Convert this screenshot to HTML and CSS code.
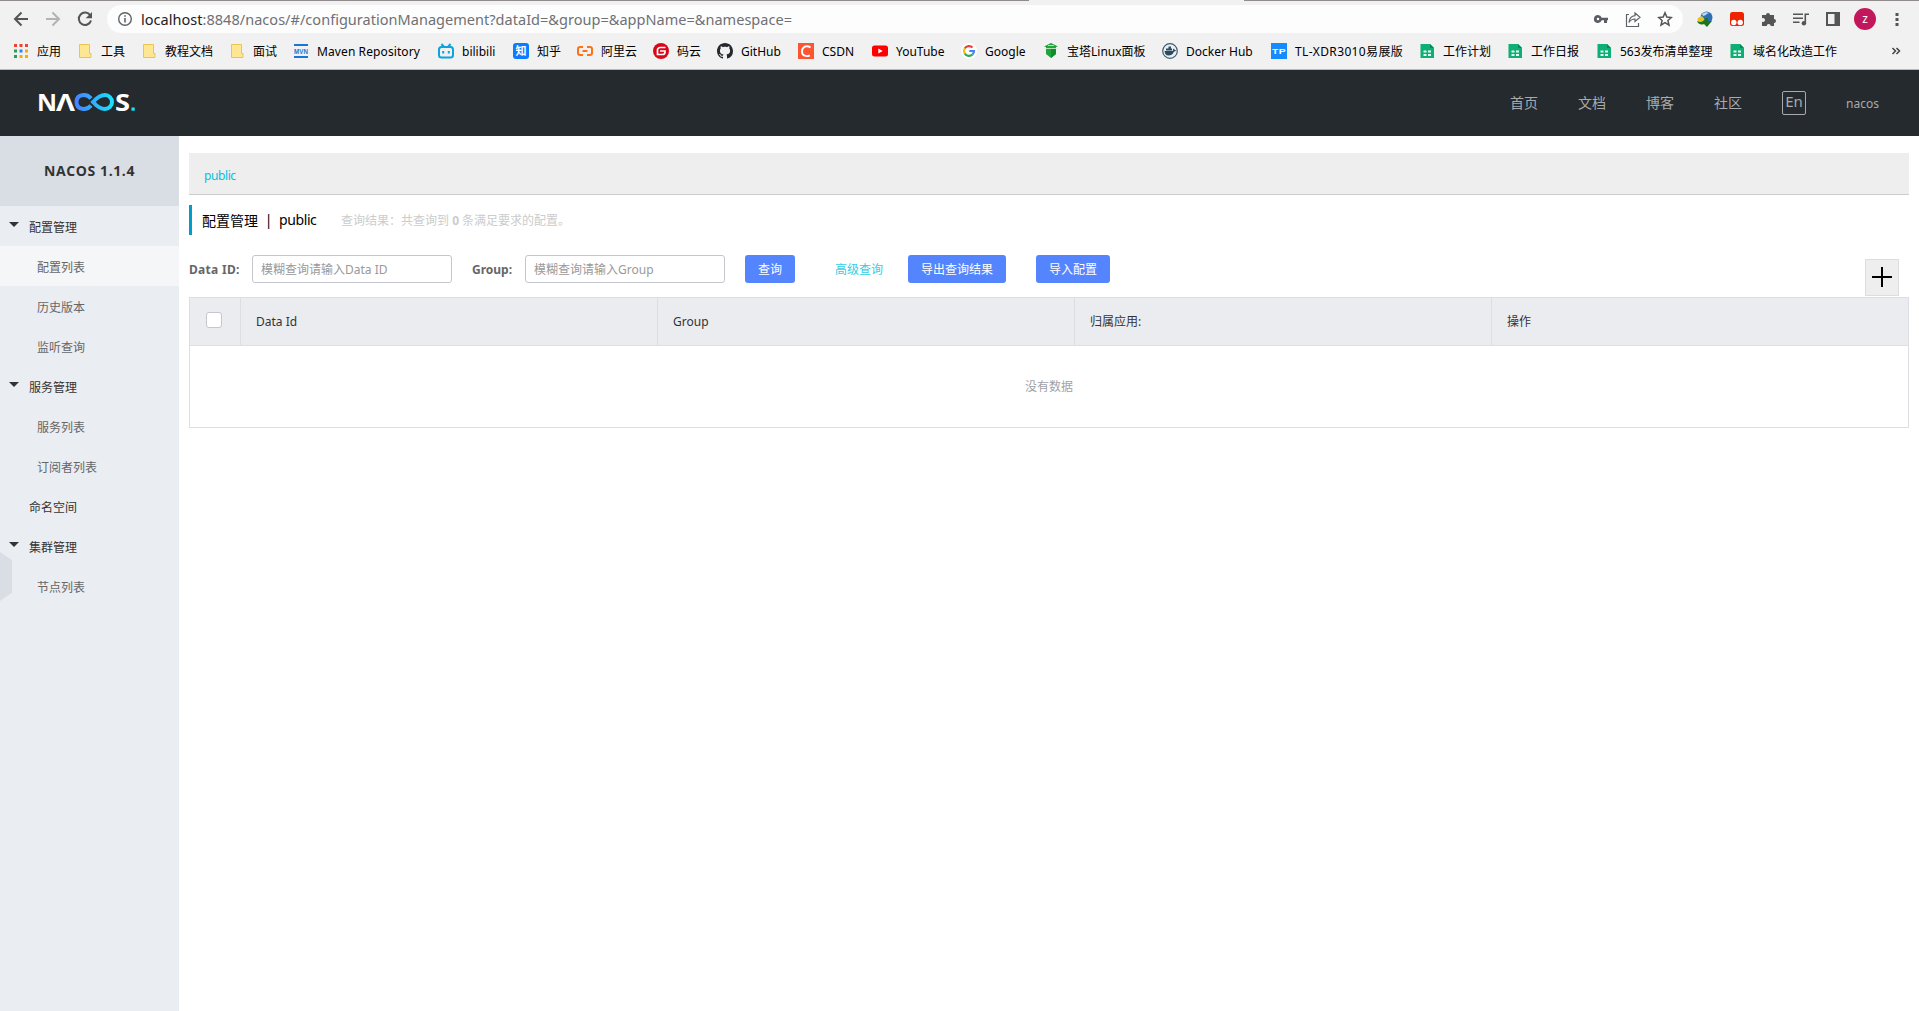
FILE: index.html
```html
<!DOCTYPE html>
<html lang="zh-CN">
<head>
  <meta charset="UTF-8">
  <title>Nacos</title>
  <link rel="stylesheet" href="styles.css">
</head>
<body>
  <div class="browser">
    <div class="tab-edge"><span></span><span></span></div>
    <div class="toolbar">
      <div class="nav-buttons">
        <svg class="icon" viewBox="0 0 16 16"><path d="M15 8H2.500M8.500 1.500 2 8l6.500 6.500" fill="none" stroke="#555" stroke-width="2"/></svg>
        <svg class="icon" viewBox="0 0 16 16"><path d="M1 8h12.500M7.500 1.500 14 8l-6.500 6.500" fill="none" stroke="#b3b3b3" stroke-width="2"/></svg>
        <svg class="icon" viewBox="0 0 16 16"><path d="M13.300 4.500A6.200 6.200 0 1 0 14 9.500" fill="none" stroke="#555" stroke-width="2"/><path d="M15 1v6.300H8.700z" fill="#555"/></svg>
      </div>
      <div class="omnibox">
        <svg class="icon" viewBox="0 0 16 16"><circle cx="8" cy="8" r="6.300" fill="none" stroke="#5f6368" stroke-width="1.400"/><path d="M7.200 7h1.600v4.500H7.200zM7.200 4.200h1.600v1.600H7.200z" fill="#5f6368"/></svg>
        <span class="url"><span class="host">localhost</span>:8848/nacos/#/configurationManagement?dataId=&amp;group=&amp;appName=&amp;namespace=</span>
        <svg class="icon" viewBox="0 0 16 16"><path d="M5 4a4 4 0 1 0 3.700 5.300H11V12h3V9.300h1V6.700H8.700A4 4 0 0 0 5 4zm0 2.700a1.300 1.300 0 1 1 0 2.600 1.300 1.300 0 0 1 0-2.600z" fill="#5a5d61"/></svg>
        <svg class="icon" viewBox="0 0 16 16"><path d="M4 3.500H1.500v12h12V12" fill="none" stroke="#5f6368" stroke-width="1.200"/><path d="M10 2l5 4.300-5 4.200V8C7 8 5.500 9 4 11.500 4.300 7.500 6.500 5 10 4.600z" fill="none" stroke="#5f6368" stroke-width="1.200"/></svg>
        <svg class="icon" viewBox="0 0 16 16"><path d="M8 1.800l1.800 4.300 4.600.4-3.500 3 1.100 4.600L8 11.600l-4 2.500 1.100-4.600-3.500-3 4.600-.4z" fill="none" stroke="#555" stroke-width="1.500"/></svg>
      </div>
      <div class="extensions">
        <svg class="icon" viewBox="0 0 16 16"><circle cx="9.500" cy="6.500" r="6" fill="#2d6fb5"/><path d="M5 3c2-2 5-2.500 7-1-2 0-3 3-6 3z" fill="#b9d8ee"/><path d="M1 7l4-2 4 5-5 3c-3 0-4-3-3-6z" fill="#e2c328"/><path d="M0 10c3 2 7 1 8-3h3v3h4l-5 6-3-3c-3 1.500-6 0-7-3z" fill="#20731f"/></svg>
        <svg class="icon" viewBox="0 0 16 16"><rect x="1" y="1" width="14" height="14" rx="2.500" fill="#ee2400"/><circle cx="4.800" cy="11.500" r="2.700" fill="#fff"/><circle cx="11.200" cy="11.500" r="2.700" fill="#fff"/></svg>
        <svg class="icon" viewBox="0 0 16 16"><path d="M1 4h4a2 2 0 1 1 4 0h4v4a2 2 0 1 1 0 4v3H9.700a2 2 0 1 0-4 0H1v-4.300a2 2 0 1 0 0-3.400z" fill="#555"/></svg>
        <svg class="icon" viewBox="0 0 16 16"><path d="M0 3.200h10M0 7.200h10M0 11.200h6.500" stroke="#555" stroke-width="1.600"/><path d="M12.300 12V3.200H16" fill="none" stroke="#555" stroke-width="1.600"/><circle cx="10.900" cy="12.300" r="2.200" fill="#555"/></svg>
        <svg class="icon" viewBox="0 0 16 16"><path d="M1 1h14v14H1zM3 3v10h6.500V3z" fill="#555" fill-rule="evenodd"/></svg>
        <span class="avatar">z</span>
        <svg class="icon" viewBox="0 0 16 16"><path d="M6.500 2h3v3h-3zM6.500 7h3v3h-3zM6.500 12h3v3h-3z" fill="#555"/></svg>
      </div>
    </div>
    <div class="bookmarks">
      <a class="bookmark"><svg class="icon" viewBox="0 0 16 16"><path d="M1 1h3v3H1zM6.500 1h3v3h-3zM12 1h3v3h-3z" fill="#ea4335"/><path d="M1 6.500h3v3H1zM1 12h3v3H1z" fill="#2e9e57"/><path d="M6.500 6.500h3v3h-3z" fill="#2684fc"/><path d="M12 6.500h3v3h-3zM6.500 12h3v3h-3zM12 12h3v3h-3z" fill="#f9ab00"/></svg>应用</a>
      <a class="bookmark"><svg class="icon" viewBox="0 0 16 16"><path d="M2.500 1.500h10v9h1.500v4H2.500z" fill="#ffe693" stroke="#ecc550"/></svg>工具</a>
      <a class="bookmark"><svg class="icon" viewBox="0 0 16 16"><path d="M2.500 1.500h10v9h1.500v4H2.500z" fill="#ffe693" stroke="#ecc550"/></svg>教程文档</a>
      <a class="bookmark"><svg class="icon" viewBox="0 0 16 16"><path d="M2.500 1.500h10v9h1.500v4H2.500z" fill="#ffe693" stroke="#ecc550"/></svg>面试</a>
      <a class="bookmark maven"><svg class="icon" viewBox="0 0 16 16"><path d="M1 1h14v2H1zM1 13h14v2H1z" fill="#1976d2"/><text x="1" y="10.800" textLength="14" lengthAdjust="spacingAndGlyphs" class="icon-text" fill="#1976d2">MVN</text></svg>Maven Repository</a>
      <a class="bookmark"><svg class="icon" viewBox="0 0 16 16"><rect x="1" y="4" width="14" height="10.500" rx="2.500" fill="none" stroke="#0da3e0" stroke-width="2"/><path d="M3.500 1l2.500 3M12.500 1 10 4M5.200 8v2.500M10.800 8v2.500" stroke="#0da3e0" stroke-width="2"/></svg>bilibili</a>
      <a class="bookmark"><svg class="icon" viewBox="0 0 16 16"><rect width="16" height="16" rx="3" fill="#0b7bff"/><text x="2.500" y="12" class="icon-zhi" fill="#fff">知</text></svg>知乎</a>
      <a class="bookmark"><svg class="icon" viewBox="0 0 16 16"><path d="M6 4H3a2 2 0 0 0-2 2v4a2 2 0 0 0 2 2h3M10 4h3a2 2 0 0 1 2 2v4a2 2 0 0 1-2 2h-3M5.500 8h5" fill="none" stroke="#ff7214" stroke-width="2"/></svg>阿里云</a>
      <a class="bookmark"><svg class="icon" viewBox="0 0 16 16"><circle cx="8" cy="8" r="8" fill="#d80718"/><path d="M12.500 4.500H7A2.500 2.500 0 0 0 4.500 7v4.500H9.500A2.500 2.500 0 0 0 12 9V8H7" fill="none" stroke="#fff" stroke-width="1.700"/></svg>码云</a>
      <a class="bookmark"><svg class="icon" viewBox="0 0 16 16"><path fill="#24292e" d="M8 0C3.580 0 0 3.580 0 8c0 3.540 2.290 6.530 5.470 7.590.4.070.55-.17.55-.38 0-.19-.01-.82-.01-1.490-2.010.37-2.530-.49-2.690-.94-.09-.23-.48-.94-.82-1.130-.28-.15-.68-.52-.01-.53.63-.01 1.080.58 1.230.82.72 1.210 1.870.87 2.330.66.070-.52.28-.87.51-1.070-1.780-.2-3.640-.89-3.640-3.950 0-.87.31-1.590.82-2.150-.08-.2-.36-1.020.08-2.120 0 0 .67-.21 2.200.82.64-.18 1.320-.27 2-.27s1.360.09 2 .27c1.530-1.040 2.200-.82 2.200-.82.44 1.100.16 1.920.08 2.120.51.56.82 1.270.82 2.150 0 3.070-1.870 3.750-3.650 3.950.29.25.54.73.54 1.480 0 1.070-.01 1.930-.01 2.200 0 .21.15.46.55.38A8.010 8.010 0 0 0 16 8c0-4.420-3.580-8-8-8z"/></svg>GitHub</a>
      <a class="bookmark"><svg class="icon" viewBox="0 0 16 16"><path d="M0 0h16v16H0z" fill="#fc5531"/><path d="M12.500 4.500C9 2 4 3.500 4 8.500c0 4.500 4.500 5.500 7.800 3.800" fill="none" stroke="#fff" stroke-width="1.900"/></svg>CSDN</a>
      <a class="bookmark"><svg class="icon" viewBox="0 0 16 16"><rect y="2.500" width="16" height="11" rx="2.500" fill="#f00"/><path d="M6.300 5.500v5l4.400-2.500z" fill="#fff"/></svg>YouTube</a>
      <a class="bookmark"><svg class="icon" viewBox="0 0 16 16"><circle cx="8" cy="8" r="8" fill="#fff"/><g fill="none" stroke-width="2.200"><path d="M3.700 5.500A5 5 0 0 1 11.500 4.500" stroke="#ea4335"/><path d="M3.700 5.500a5 5 0 0 0 0 5" stroke="#fbbc05"/><path d="M3.700 10.500a5 5 0 0 0 7.800 1" stroke="#34a853"/><path d="M11.500 11.500A5 5 0 0 0 13 8H8.300" stroke="#4285f4"/></g></svg>Google</a>
      <a class="bookmark"><svg class="icon" viewBox="0 0 16 16"><path d="M1 3.500 6 1l2-1 2 1 5 2.500-2 .5v7l-5 4-5-4V4z" fill="#20a53a"/><path d="M1.500 5.500h13M5 2.500h6" stroke="#d5eeda" stroke-width=".8"/><path d="M8 6v9l5-4V6z" fill="#148a2d"/></svg>宝塔Linux面板</a>
      <a class="bookmark"><svg class="icon" viewBox="0 0 16 16"><circle cx="8" cy="8" r="7.300" fill="#e9f0f4" stroke="#3f5b6e" stroke-width="1.200"/><path d="M2.500 8h8.300c0-1.200.3-2 1-2.500.7.500.8 1 .8 1.500l1.400.3c-.4 1-1 1.300-2 1.300-1 3-3.300 4-5.500 4S3 11.500 2.500 8zM4 5.500h6v2H4zM6.500 3.500h2.500v2H6.500z" fill="#2c4b60"/></svg>Docker Hub</a>
      <a class="bookmark tp-link"><svg class="icon" viewBox="0 0 16 16"><path d="M0 0h16v16H0z" fill="#148cff"/><text x="1" y="11" textLength="14" lengthAdjust="spacingAndGlyphs" class="icon-text" fill="#fff">TP</text></svg>TL-XDR3010易展版</a>
      <a class="bookmark"><svg class="icon" viewBox="0 0 16 16"><path d="M1.500 1h9.500l4 4v10h-13.500z" fill="#0eaf74"/><path d="M11 1l4 4h-4z" fill="#078a5a"/><path d="M4.500 7.500h3v2h-3zM9 7.500h3v2H9zM4.500 11h3v2h-3zM9 11h3v2H9z" fill="#e4fff3"/></svg>工作计划</a>
      <a class="bookmark"><svg class="icon" viewBox="0 0 16 16"><path d="M1.500 1h9.500l4 4v10h-13.500z" fill="#0eaf74"/><path d="M11 1l4 4h-4z" fill="#078a5a"/><path d="M4.500 7.500h3v2h-3zM9 7.500h3v2H9zM4.500 11h3v2h-3zM9 11h3v2H9z" fill="#e4fff3"/></svg>工作日报</a>
      <a class="bookmark"><svg class="icon" viewBox="0 0 16 16"><path d="M1.500 1h9.500l4 4v10h-13.500z" fill="#0eaf74"/><path d="M11 1l4 4h-4z" fill="#078a5a"/><path d="M4.500 7.500h3v2h-3zM9 7.500h3v2H9zM4.500 11h3v2h-3zM9 11h3v2H9z" fill="#e4fff3"/></svg>563发布清单整理</a>
      <a class="bookmark"><svg class="icon" viewBox="0 0 16 16"><path d="M1.500 1h9.500l4 4v10h-13.500z" fill="#0eaf74"/><path d="M11 1l4 4h-4z" fill="#078a5a"/><path d="M4.500 7.500h3v2h-3zM9 7.500h3v2H9zM4.500 11h3v2h-3zM9 11h3v2H9z" fill="#e4fff3"/></svg>域名化改造工作</a>
      <svg class="icon more" viewBox="0 0 16 16"><path d="M4.500 5l3 3-3 3M8.500 5l3 3-3 3" fill="none" stroke="#444" stroke-width="1.500"/></svg>
    </div>
  </div>

  <header class="header">
    <svg class="logo" viewBox="0 0 98 20" width="98" height="20">
      <defs>
        <linearGradient id="wave" gradientUnits="userSpaceOnUse" x1="36" y1="0" x2="77" y2="0">
          <stop offset="0" stop-color="#4a7dff"/>
          <stop offset="1" stop-color="#14e8fa"/>
        </linearGradient>
      </defs>
      <text x="-1" y="18.500" textLength="20" lengthAdjust="spacingAndGlyphs" class="logo-text">N</text>
      <text x="18" y="18.500" textLength="19" lengthAdjust="spacingAndGlyphs" class="logo-text">Λ</text>
      <path d="M53 13.500C48.500 19 38.500 18 38.500 10S48.500 1 53 6.500M55 10C59 5.500 62 3 67 3a7 7 0 0 1 0 14C62 17 59 14.500 55 10z" fill="none" stroke="url(#wave)" stroke-width="4"/>
      <text x="77" y="18.500" textLength="15" lengthAdjust="spacingAndGlyphs" class="logo-text">S</text>
      <path d="M93.500 15.500h3.200v3.200h-3.200z" fill="#14e8fa"/>
    </svg>
    <nav class="nav">
      <a>首页</a>
      <a>文档</a>
      <a>博客</a>
      <a>社区</a>
      <a class="lang">En</a>
      <a class="user">nacos</a>
    </nav>
  </header>

  <div class="layout">
    <aside class="sidebar">
      <h1 class="version">NACOS 1.1.4</h1>
      <ul class="menu">
        <li class="group open">配置管理</li>
        <li class="item active">配置列表</li>
        <li class="item">历史版本</li>
        <li class="item">监听查询</li>
        <li class="group open">服务管理</li>
        <li class="item">服务列表</li>
        <li class="item">订阅者列表</li>
        <li class="group">命名空间</li>
        <li class="group open">集群管理</li>
        <li class="item">节点列表</li>
      </ul>
      <div class="collapse"></div>
    </aside>

    <main class="main">
      <div class="namespace-bar">public</div>
      <div class="page-title">
        <span>配置管理</span><span class="divider">|</span><span class="ns">public</span>
        <span class="hint">查询结果：共查询到 <strong>0</strong> 条满足要求的配置。</span>
      </div>
      <form class="search">
        <label class="label-id">Data ID:</label>
        <input type="text" placeholder="模糊查询请输入Data ID">
        <label class="label-group">Group:</label>
        <input type="text" placeholder="模糊查询请输入Group">
        <button type="button" class="btn query">查询</button>
        <a class="advanced">高级查询</a>
        <button type="button" class="btn export">导出查询结果</button>
        <button type="button" class="btn import">导入配置</button>
        <div class="add"><svg viewBox="0 0 20 20" width="20" height="20"><path d="M10 0v20M0 10h20" stroke="#000" stroke-width="2"/></svg></div>
      </form>
      <div class="table">
        <div class="table-head">
          <div class="check"><input type="checkbox" class="checkbox"></div>
          <div>Data Id</div>
          <div>Group</div>
          <div>归属应用:</div>
          <div>操作</div>
        </div>
        <div class="empty">没有数据</div>
      </div>
    </main>
  </div>
</body>
</html>
```
FILE: styles.css
```css
* {
  box-sizing: border-box;
}
body {
  margin: 0;
  height: 1011px;
  overflow: hidden;
  display: flex;
  flex-direction: column;
  background: #fff;
  font-family: "Noto Sans", "Noto Sans CJK SC", sans-serif;
  font-size: 12px;
  color: #333;
}
.icon {
  width: 16px;
  height: 16px;
  flex: none;
}
.icon-text {
  font: bold 8px "Liberation Sans", sans-serif;
}
.icon-zhi {
  font: bold 11px "Noto Sans CJK SC", sans-serif;
}

/* browser bars */
.browser {
  height: 70px;
  flex: none;
  background: #f1f1f1;
  border-bottom: 1px solid #b9babb;
}
.tab-edge {
  display: flex;
  justify-content: space-between;
  height: 1px;
}
.tab-edge span {
  width: 1029px;
  background: #908c8e;
}
.tab-edge span + span {
  width: 675px;
}
.toolbar {
  display: flex;
  align-items: center;
  height: 36px;
  padding: 0 14px 0 13px;
}
.nav-buttons, .extensions {
  display: flex;
  align-items: center;
  gap: 16px;
}
.omnibox {
  display: flex;
  align-items: center;
  gap: 16px;
  width: 1576px;
  height: 28px;
  margin: 0 14px 0 14px;
  padding: 0 10px;
  border-radius: 14px;
  background: #fdfdfd;
}
.url {
  flex: 1;
  margin-left: -8px;
  padding-bottom: 1px;
  font-size: 14.500px;
  letter-spacing: .03px;
  color: #6e7175;
  white-space: nowrap;
}
.host {
  color: #202124;
}
.avatar {
  width: 22px;
  height: 22px;
  margin: 0 -3px;
  border-radius: 50%;
  background: #c2185b;
  color: #fff;
  line-height: 21px;
  text-align: center;
}
.bookmarks {
  display: grid;
  grid-template-columns: 64px 64px 88px 64px 145px 75px 64px 76px 64px 81px 74px 89px 82px 119px 109px 148px 88px 89px 133px 124px 1fr;
  align-items: center;
  height: 32px;
  padding: 0 15px 4px 13px;
}
.bookmark {
  display: flex;
  align-items: center;
  gap: 8px;
  color: #000;
  white-space: nowrap;
}
.maven {
  letter-spacing: .1px;
}
.tp-link {
  letter-spacing: .35px;
}
.more {
  justify-self: end;
}

/* header */
.header {
  display: flex;
  align-items: center;
  justify-content: space-between;
  flex: none;
  height: 66px;
  padding: 0 40px 2px 38px;
  background: #252a2f;
}
.logo {
  overflow: visible;
}
.logo-text {
  font: bold 24px "Open Sans", sans-serif;
  fill: #fff;
}
.nav {
  display: flex;
  align-items: center;
  gap: 40px;
  color: #a8aaac;
  font-size: 14px;
}
.lang {
  width: 24px;
  height: 24px;
  margin-top: 2px;
  border: 1px solid #a8aaac;
  border-radius: 2px;
  font-size: 15px;
  line-height: 19px;
  text-align: center;
}
.user {
  margin-top: 2px;
  font-size: 12px;
}

/* layout */
.layout {
  display: flex;
  flex: 1;
}
.sidebar {
  position: relative;
  width: 179px;
  background: #eaedf2;
}
.version {
  margin: 0;
  height: 70px;
  background: #d9dde4;
  font: bold 14px/70px "Open Sans", sans-serif;
  letter-spacing: .6px;
  text-align: center;
}
.menu {
  margin: 0;
  padding: 0;
  list-style: none;
}
.menu li {
  display: flex;
  align-items: center;
  height: 40px;
  padding-top: 2px;
}
.group {
  padding-left: 29px;
}
.group.open {
  padding-left: 9px;
}
.group.open::before {
  content: "";
  margin: -5px 10px 0 0;
  border: 5px solid transparent;
  border-top-color: #333;
  border-bottom: 0;
}
.item {
  padding-left: 37px;
  color: #666;
}
.item.active {
  background: #f4f6f8;
}
.collapse {
  position: absolute;
  left: 0;
  top: 416px;
  width: 12px;
  height: 49px;
  background: #d9dde4;
  clip-path: polygon(0 0, 100% 17%, 100% 83%, 0 100%);
}
.main {
  flex: 1;
  padding: 17px 10px 0;
}
.namespace-bar {
  height: 42px;
  padding-left: 15px;
  background: #eee;
  border-bottom: 1px solid #ccc;
  color: #00c1de;
  letter-spacing: -.4px;
  line-height: 45px;
}
.page-title {
  display: flex;
  align-items: center;
  height: 30px;
  margin-top: 10px;
  padding: 0 0 1px 10px;
  border-left: 3px solid #009dcc;
  color: #000;
  font-size: 14px;
}
.divider {
  width: 21px;
  text-align: center;
}
.ns {
  width: 62px;
  letter-spacing: -.4px;
}
.hint {
  color: #ccc;
  font-size: 12px;
}
.search {
  display: flex;
  align-items: center;
  height: 28px;
  margin: 20px 0 14px;
}
.search label {
  font-weight: bold;
  color: #666;
}
.label-id {
  width: 63px;
  letter-spacing: .3px;
}
.label-group {
  width: 53px;
  margin-left: 20px;
}
.search input {
  width: 200px;
  height: 28px;
  padding: 0 8px;
  border: 1px solid #c4c6cf;
  border-radius: 3px;
  font: inherit;
}
.search input::placeholder {
  color: #999;
}
.btn {
  height: 28px;
  padding: 0;
  border: 0;
  border-radius: 3px;
  background: #5584ff;
  color: #fff;
  font: inherit;
}
.query {
  width: 50px;
  margin-left: 20px;
}
.advanced {
  width: 48px;
  margin: 0 25px 0 40px;
  color: #33cde5;
}
.export {
  width: 98px;
}
.import {
  width: 74px;
  margin-left: 30px;
}
.add {
  display: flex;
  align-items: center;
  justify-content: center;
  width: 34px;
  height: 37px;
  margin: 17px 10px 0 auto;
  padding-bottom: 2px;
  background: #eee;
  border: 1px solid #ddd;
}
.table {
  border: 1px solid #dcdee3;
}
.table-head {
  display: grid;
  grid-template-columns: 50px 417px 417px 417px 1fr;
  height: 48px;
  background: #ebecf0;
  border-bottom: 1px solid #dcdee3;
}
.table-head div {
  padding-left: 15px;
  line-height: 47px;
}
.table-head div + div {
  border-left: 1px solid #dcdee3;
}
.table-head .check {
  display: flex;
  align-items: center;
  padding-left: 16px;
}
.checkbox {
  appearance: none;
  width: 16px;
  height: 16px;
  margin: -3px 0 0;
  border: 1px solid #c4c6cf;
  border-radius: 3px;
  background: #fff;
}
.empty {
  height: 81px;
  line-height: 82px;
  text-align: center;
  color: #a0a2a8;
}
```
